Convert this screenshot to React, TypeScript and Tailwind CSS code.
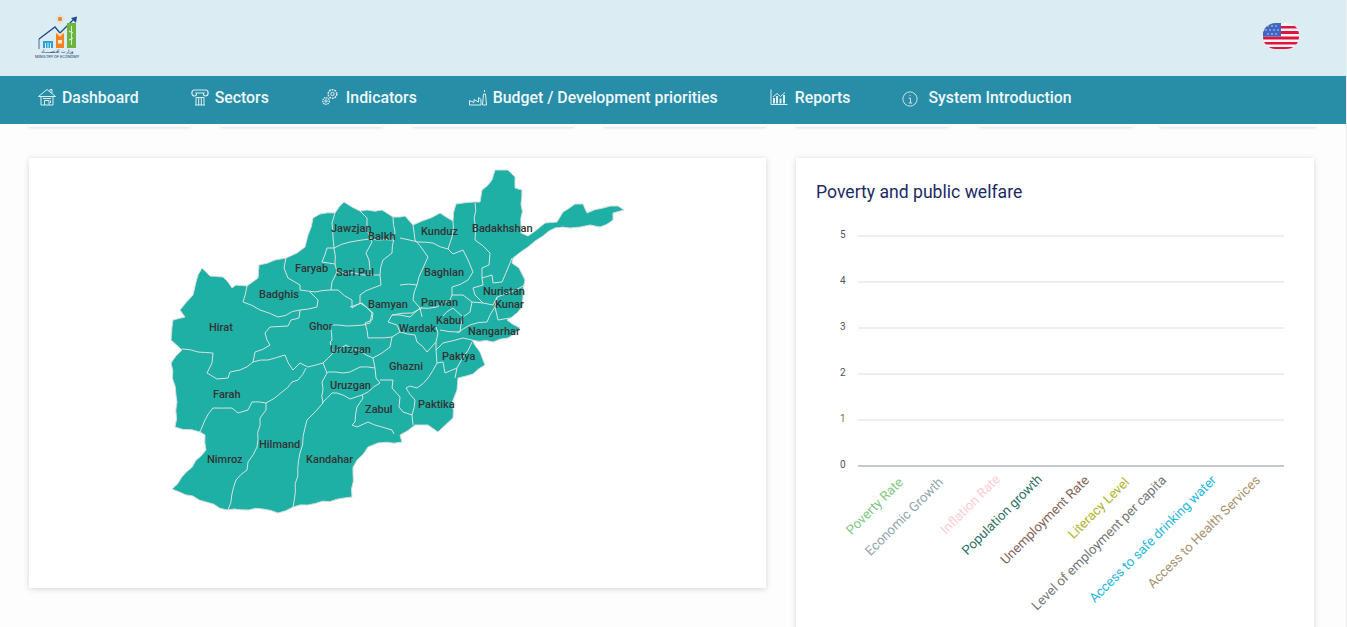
const outlineRaw = "171,340 172,327 173,320 185,317 180,310 193,295 196,282 202,268 210,276 223,277 232,288 236,285 247,286 258,278 259,265 275,260 286,258 297,253 305,247 308,235 313,218 320,214 335,213 344,202 360,211 382,210 393,217 400,217 405,216 413,225 422,221 440,213 453,221 456,204 474,202 480,202 482,190 492,180 495,170 508,170 515,177 515,188 522,190 521,233 528,236 545,223 557,222 563,212 575,204 583,204 587,213 603,208 618,206 624,210 613,213 613,220 600,227 590,225 570,228 555,228 543,236 528,247 513,258 512,263 519,268 525,280 523,297 522,307 512,317 507,320 520,328 508,338 493,342 472,340 480,352 485,365 473,374 458,378 457,390 452,403 453,418 438,432 428,425 415,425 400,435 402,442 378,443 368,447 353,467 353,473 352,497 293,507 278,513 263,509 227,510 172,489 206,450 205,435 200,432 175,427 177,402 171,363 182,350";

const bordersRaw = [
  "335,213 332,223 333,237 334,248 327,248 322,262 335,264",
  "360,211 367,218 367,230 372,242 366,253 369,260 370,275",
  "334,248 350,242 370,239 393,240",
  "334,248 335,264 337,272 332,282 331,290",
  "393,217 395,232 392,253 383,260 380,275 370,275 337,272",
  "380,275 381,285 373,288 360,295 360,303",
  "286,258 284,268 288,278 300,285 300,290 315,292 331,290 338,290 352,300 352,308 360,303 372,313 370,323 363,325",
  "247,286 243,302 260,310 278,317 300,310 317,307 318,300 310,292",
  "300,310 299,318 291,320 288,326 270,327 265,333 267,340 270,345 255,352 253,362 240,370 230,372 228,378 217,379 207,373 212,363 213,353 198,352 182,349",
  "330,325 347,326 363,325",
  "330,325 332,340 330,342 333,353 323,363 308,367 300,363 293,370 285,355 268,360 253,362",
  "323,363 327,373 322,382 323,403 315,412 307,420 300,453 293,507",
  "373,358 390,347 392,337 368,338 365,323 372,320 373,313 362,303 350,307",
  "333,353 346,345 373,358",
  "373,358 375,368 360,367 350,372 343,373 328,372 327,373",
  "306,368 298,380 292,382 282,392 266,403 252,402 248,410 238,413 232,408 213,408 205,420 200,432",
  "266,403 266,410 260,418 257,447 248,462 247,470 236,480 228,510",
  "332,393 322,403",
  "332,393 337,393 350,399 362,395 363,398 357,407 355,422 352,425 357,427 368,422 382,427 392,430 394,434",
  "362,395 380,383 376,378 375,368",
  "380,380 393,380 392,388 400,397 399,407 403,412 412,415 415,400 406,388 410,386 417,388 428,378 437,363 436,350",
  "412,415 413,425",
  "392,337 400,332 415,335 417,342 427,352 436,342 438,333 436,327",
  "436,342 436,350",
  "400,332 397,325 388,322 392,315 412,313 422,308",
  "436,350 443,343 463,338 472,340",
  "437,363 443,362 445,373 457,368 455,378",
  "457,368 463,357 472,342",
  "475,203 475,240 490,253 489,265 482,268 482,278",
  "413,225 415,240 428,257 423,268 417,285 413,300 420,308 422,317",
  "400,238 418,242 433,243 448,249 453,254 463,250 468,260 473,272 468,280 452,287 452,295 463,295 472,302 470,312 463,317",
  "453,221 452,237 448,249",
  "400,285 417,285",
  "482,278 492,275 493,283 502,282 510,263 512,258",
  "473,288 475,295 483,303 493,305 497,297 508,293 525,285",
  "482,278 483,285 473,288",
  "497,297 495,307 498,320 510,318",
  "495,307 487,322 470,325 457,333",
  "472,302 483,303",
  "437,322 442,317 453,308 463,317 460,332 440,330",
  "420,308 437,307 450,300 452,295",
  "420,308 410,317 400,315 392,315",
];

// The real borders wander: long straight segments get small deterministic bends.
function wander(points: string): string {
  const pts = points.split(" ").map((p) => p.split(",").map(Number));
  const out: string[] = [];
  pts.forEach((p, i) => {
    out.push(`${p[0]},${p[1]}`);
    const q = pts[i + 1];
    if (!q) return;
    const dx = q[0] - p[0];
    const dy = q[1] - p[1];
    const len = Math.hypot(dx, dy);
    const steps = Math.floor(len / 7);
    for (let s = 1; s < steps; s++) {
      const t = s / steps;
      const off = Math.sin((p[0] + p[1]) * 1.7 + s * 2.3) * 0.9;
      out.push(`${(p[0] + dx * t - (dy / len) * off).toFixed(1)},${(p[1] + dy * t + (dx / len) * off).toFixed(1)}`);
    }
  });
  return out.join(" ");
}

const outline = wander(outlineRaw);
const borders = bordersRaw.map(wander);

const labels: [string, number, number][] = [
  ["Jawzjan", 331, 232], ["Balkh", 368, 240], ["Kunduz", 421, 235], ["Badakhshan", 472, 232],
  ["Faryab", 295, 272], ["Sari Pul", 336, 276], ["Baghlan", 424, 276], ["Badghis", 259, 298],
  ["Nuristan", 483, 295], ["Parwan", 421, 306], ["Kunar", 495, 308], ["Bamyan", 368, 308],
  ["Kabul", 436, 324], ["Ghor", 309, 330], ["Hirat", 209, 331], ["Wardak", 399, 332],
  ["Nangarhar", 468, 335], ["Uruzgan", 330, 353], ["Paktya", 442, 360], ["Ghazni", 389, 370],
  ["Uruzgan", 330, 389], ["Farah", 213, 398], ["Paktika", 418, 408], ["Zabul", 365, 413],
  ["Hilmand", 259, 448], ["Nimroz", 207, 463], ["Kandahar", 306, 463],
];

const axis: [string, number, string][] = [
  ["5", 236, "#4b5563"], ["4", 282, "#4b5563"], ["3", 328, "#4b5563"],
  ["2", 374, "#4b5563"], ["1", 420, "#8a6d2b"], ["0", 466, "#4b5563"],
];

const xLabels: [string, number, number, string][] = [
  ["Poverty Rate", 904, 483, "#81c784"],
  ["Economic Growth", 944, 483, "#90a4ae"],
  ["Inflation Rate", 1001, 480, "#ffcdd2"],
  ["Population growth", 1043, 480, "#2f7064"],
  ["Unemployment Rate", 1090, 481, "#7f625a"],
  ["Literacy Level", 1130, 483, "#afb42b"],
  ["Level of employment per capita", 1167, 481, "#757575"],
  ["Access to safe drinking water", 1217, 481, "#26b6d9"],
  ["Access to Health Services", 1261, 481, "#a8916f"],
];

const Logo = () => (
  <div className="relative w-[44px] h-[46px]">
    <svg viewBox="0 0 44 46" className="w-[44px] h-[46px]">
      <circle cx="24" cy="6" r="2.200" fill="#f58220" />
      <g stroke="#f7b27a" strokeWidth="0.6">
        <path d="M24 1.500v1.500M24 9v1.500M19.500 6h1.500M27 6h1.500M21 3l1 1M27 3l-1 1M21 9l1-1M27 9l-1-1" />
      </g>
      <path d="M3 36 V26" fill="none" stroke="#1d4b8f" strokeWidth="0.8" />
      <path d="M3 26 L19 14 L24 20 L38 6" fill="none" stroke="#1d4b8f" strokeWidth="1.300" />
      <path d="M35 5 L41 3.500 L40 10 Z" fill="#1d4b8f" />
      <rect x="7" y="28" width="10" height="7" fill="#2a9fd8" />
      <path d="M9.500 30v5M12 29.500v5.500M14.500 30v5" stroke="#dff2fb" strokeWidth="1" />
      <rect x="20" y="20" width="8" height="15" fill="#f58220" />
      <path d="M20 20l4 4 4-4Z" fill="#fbd0a4" />
      <rect x="22" y="27" width="4" height="3.500" fill="#fff" opacity="0.8" />
      <rect x="31" y="10" width="9" height="25" fill="#6cb33f" />
      <path d="M35.500 13v19M33 18l4 2M33 27l4-2" stroke="#d8eec8" strokeWidth="1.100" />
    </svg>
    <div className="absolute -left-[1px] top-[35px] w-[44px] text-center leading-[6px] text-[5px] whitespace-nowrap text-[#23406f] font-['Noto_Sans','Noto_Sans_CJK_SC',sans-serif]" dir="rtl">وزارت اقتصـــــاد</div>
    <div className="absolute -left-[1px] top-[42px] w-[44px] text-center leading-[3px] text-[4px] whitespace-nowrap text-[#23406f] font-['Roboto',sans-serif]">MINISTRY OF ECONOMY</div>
  </div>
);

const Flag = () => (
  <svg viewBox="0 0 36 26" className="w-[36px] h-[26px]">
    <defs>
      <clipPath id="flagclip"><rect x="0" y="0" width="36" height="26" rx="13" ry="12" /></clipPath>
    </defs>
    <g clipPath="url(#flagclip)">
      <rect width="36" height="26" fill="#f4f4f6" />
      <rect y="3" width="36" height="2.500" fill="#e0143c" />
      <rect y="8" width="36" height="3" fill="#e0143c" />
      <rect y="13.500" width="36" height="3" fill="#e0143c" />
      <rect y="19" width="36" height="2.500" fill="#e0143c" />
      <rect y="24" width="36" height="2" fill="#e0143c" />
      <rect width="18" height="13.500" fill="#3f66c0" />
      <g fill="#9db4e6">
        <circle cx="5" cy="3" r="0.9" /><circle cx="9" cy="3" r="0.9" /><circle cx="13" cy="3" r="0.9" />
        <circle cx="3" cy="7" r="0.9" /><circle cx="7" cy="7" r="0.9" /><circle cx="11" cy="7" r="0.9" /><circle cx="15" cy="7" r="0.9" />
        <circle cx="5" cy="11" r="0.9" /><circle cx="9" cy="11" r="0.9" /><circle cx="13" cy="11" r="0.9" />
      </g>
    </g>
  </svg>
);

const iconProps = { fill: "none", stroke: "#dceef3", strokeWidth: 1, viewBox: "0 0 18 18" };

const HomeIcon = () => (
  <svg {...iconProps} className="w-[18px] h-[18px]">
    <path d="M0.500 8.500 L9 1.500 L17.500 8.500 Z M3 8.500 V17 H15 V8.500 M12 3.500 V1.500 H14 V5" />
    <path d="M5 10.500 H13 M6.500 17 V12.500 H11 V17 M12.500 12.500 V15" />
  </svg>
);
const ColumnIcon = () => (
  <svg {...iconProps} className="w-[18px] h-[18px]">
    <path d="M3.500 8 C0 8 0 2 3.500 2 H14.500 C18 2 18 8 14.500 8 C12.500 8 12 6.500 13 5 H5 C6 6.500 5.500 8 3.500 8Z" strokeWidth="1.200" />
    <path d="M5 9.500 H13 M5 9.500 V17 M13 9.500 V17 M7.700 9.500 V17 M10.300 9.500 V17 M4 17 H14" />
  </svg>
);
const GearsIcon = () => (
  <svg {...iconProps} className="w-[18px] h-[18px]">
    <circle cx="11.500" cy="6" r="4.300" strokeDasharray="1.800 0.900" strokeWidth="1.500" />
    <circle cx="11.500" cy="6" r="1.700" />
    <circle cx="5" cy="13" r="3.300" strokeDasharray="1.400 0.800" strokeWidth="1.400" />
    <circle cx="5" cy="13" r="1.200" />
  </svg>
);
const BudgetIcon = () => (
  <svg {...iconProps} className="w-[18px] h-[18px]">
    <path d="M0.500 17 V12.500 L5 14.500 V11.500 L9.500 14 V9.500 L12 11.500 V17 Z" />
    <path d="M13.500 17 L14.500 6 H16.500 L17.500 17 Z M15.500 2 V4" />
  </svg>
);
const ReportsIcon = () => (
  <svg {...iconProps} className="w-[18px] h-[18px]">
    <path d="M1 1.500 V16.500 H17.500" />
    <path d="M4 15.500 V10 M7 15.500 V8 M10.500 15.500 V10.500 M14 15.500 V7" strokeWidth="2" />
    <path d="M3 9 L7 5.500 L10.500 8.500 L15 4.500" />
  </svg>
);
const InfoIcon = () => (
  <svg {...iconProps} className="w-[16px] h-[16px] mt-[4px]">
    <circle cx="9" cy="9" r="8" />
    <path d="M7.500 8 H9.500 V13.500 M7.500 13.500 H11.500 M9 4.500 V5.800" />
  </svg>
);

const navItems = [
  { label: "Dashboard", icon: <HomeIcon />, gap: "gap-[6px]", text: "" },
  { label: "Sectors", icon: <ColumnIcon />, gap: "gap-[6px]", text: "mt-[1px]" },
  { label: "Indicators", icon: <GearsIcon />, gap: "gap-[7px]", text: "" },
  { label: "Budget / Development priorities", icon: <BudgetIcon />, gap: "gap-[6px]", text: "" },
  { label: "Reports", icon: <ReportsIcon />, gap: "gap-[7px]", text: "" },
  { label: "System Introduction", icon: <InfoIcon />, gap: "gap-[10px]", text: "" },
];

const stubs = ["w-[162px]", "w-[162px]", "w-[161px]", "w-[162px]", "w-[153px]", "w-[154px]", "w-[156px] -ml-[3px]"];

export default function App() {
  return (
    <div className="w-[1347px] h-[627px] overflow-hidden bg-[#fdfdfd] border-r border-[#eeeeee] font-['Roboto',sans-serif]">
      <header className="h-[76px] bg-[#dcecf3] flex items-center justify-between pl-[36px] pr-[47px]">
        <div className="-mt-[5px]"><Logo /></div>
        <div className="-mt-[4px]"><Flag /></div>
      </header>
      <nav className="relative z-10 h-[48px] bg-[#288da6] flex items-center pl-[38px] gap-[52px] pb-[5px]">
        {navItems.map((n) => (
          <div key={n.label} className={`flex items-center ${n.gap}`}>
            {n.icon}
            <span className={`text-[15.850px] font-medium whitespace-nowrap text-[#eef7f9] ${n.text}`}>{n.label}</span>
          </div>
        ))}
      </nav>
      <div className="h-[3px] flex gap-[30px] pl-[29px]">
        {stubs.map((w, i) => (
          <div key={i} className={`${w} h-[3px] bg-white shadow-[0_1px_3px_rgba(0,0,0,0.12)]`} />
        ))}
      </div>
      <main className="flex items-start pl-[29px] pt-[31px] gap-[30px]">
        <section className="w-[737px] h-[430px] bg-white shadow-[0_1px_6px_rgba(0,0,0,0.16)]">
          <svg viewBox="29 158 737 430" className="block w-[737px] h-[430px]">
            <polygon points={outline} fill="#1fb0a5" stroke="#d5dcdc" strokeWidth="1" strokeLinejoin="round" />
            {borders.map((b, i) => (
              <polyline key={i} points={b} fill="none" stroke="#d9e2e2" strokeWidth="1" strokeLinejoin="round" />
            ))}
            {labels.map(([t, x, y], i) => (
              <text key={i} x={x} y={y} fontFamily="Roboto, sans-serif" fontWeight={500} fontSize="11" fill="#333333">{t}</text>
            ))}
          </svg>
        </section>
        <section className="w-[518px] h-[480px] bg-white shadow-[0_1px_6px_rgba(0,0,0,0.16)] pt-[24px]">
          <h2 className="pl-[20px] text-[17.600px] leading-[21px] font-normal text-[#1b2a63]">Poverty and public welfare</h2>
          <svg viewBox="796 203 518 424" className="block w-[518px] h-[424px]">
            {axis.map(([t, y, c]) => (
              <g key={t}>
                <line x1="858" x2="1284" y1={y} y2={y} stroke={t === "0" ? "#c6c9cc" : "#eeeeee"} strokeWidth="2" />
                <text x="840" y={y + 2} fontFamily="Roboto, sans-serif" fontSize="10" fill={c}>{t}</text>
              </g>
            ))}
            {xLabels.map(([t, x, y, c]) => (
              <text key={t} x={x} y={y} textAnchor="end" transform={`rotate(-45 ${x} ${y})`} fontFamily="Roboto, sans-serif" fontSize="13.200" fill={c}>{t}</text>
            ))}
          </svg>
        </section>
      </main>
    </div>
  );
}
